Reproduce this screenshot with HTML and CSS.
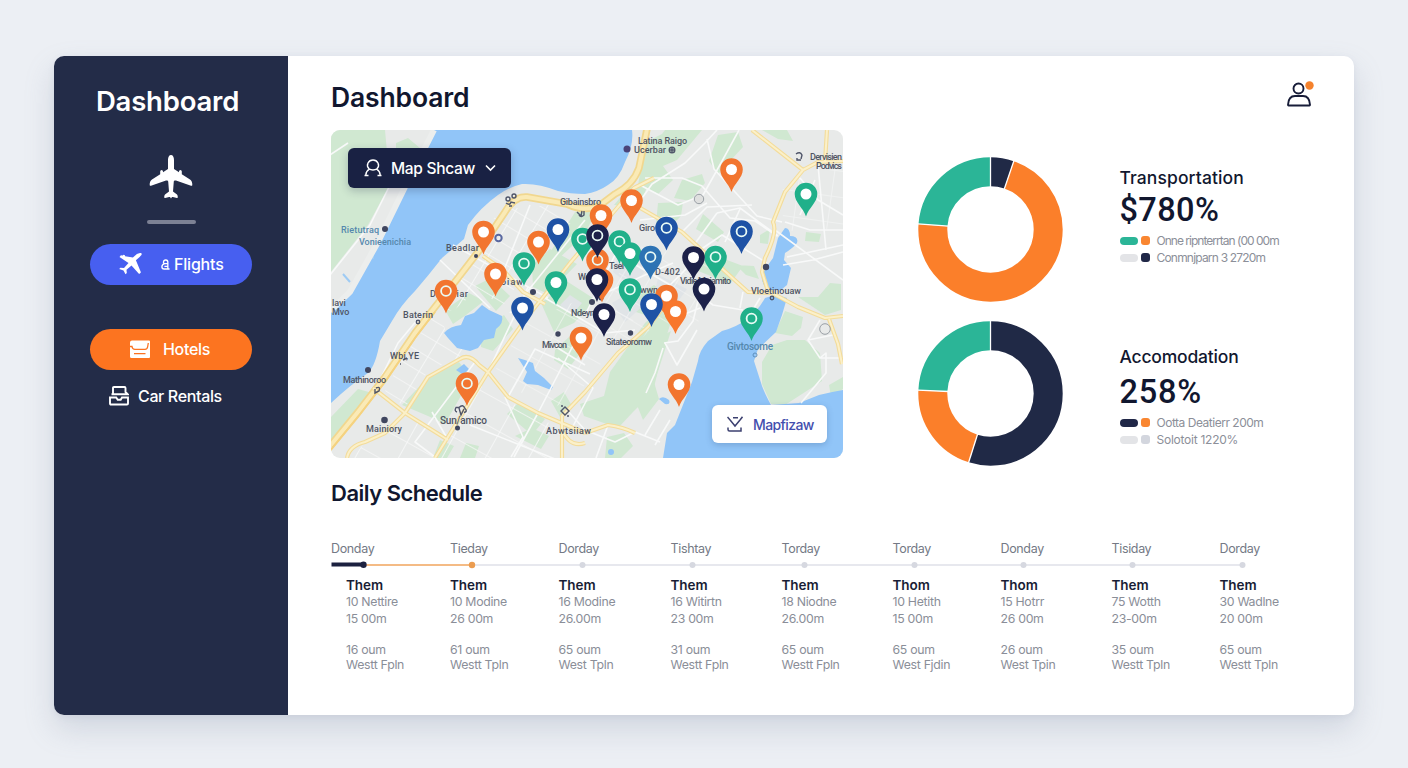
FILE: index.html
```html
<!DOCTYPE html>
<html lang="en">
<head>
<meta charset="utf-8">
<title>Dashboard</title>
<link rel="stylesheet" href="styles.css">
</head>
<body>
<div class="app">
  <aside class="sidebar">
    <div class="brand">Dashboard</div>
    <svg class="brand-plane" viewBox="0 0 44 46" fill="#fff"><path id="plane" d="M22 1c-1.900 0-3 2-3 5v9l-5 3.300v-.8q0-1.500-1.400-1.500t-1.400 1.500v2.700L3 25.500C1.300 26.800.6 28.500.7 31c0 .7.600 1 1.300.8L17 26.600c1-.3 2-.1 2.200.9l.8 10-4 3q-.9 1-.8 2.700 0 .8.900.7l4-1h.9l1 1.700 1-1.700h.9l4 1q.9.100.900-.7.100-1.700-.8-2.700l-4-3 .8-10c.2-1 1.200-1.200 2.200-.9l15 5.200c.7.200 1.300-.1 1.300-.8.100-2.500-.6-4.200-2.300-5.500l-8.200-5.300v-2.700q0-1.500-1.400-1.500T30 17.500v.8L25 15V6c0-3-1.100-5-3-5z"/></svg>
    <div class="rule"></div>
    <nav class="nav">
      <a class="nav-item flights"><svg width="26" height="24" viewBox="0 0 26 24" fill="#fff"><path d="M22 1c.9-.4 2 .3 1.700 1.300-.2.900-1 1.700-1.800 2.400l-4 3.600 4.800 11.500c.2.600.1 1-.3 1.300l-1.300.9-7.600-8.500-5 4.200.3 3.400-1.300 1.200-2-3.700-4.300-1.500 1.200-1.300 3.600.1 4.500-5L1.500 5l1-1.300c.3-.3.700-.4 1.200-.3l1 .2.700-.8 1.500.4.2 1 7.800 1.300 4-3.500c1-.5 2-.7 3.100-1z"/></svg><span><svg class="glyph-a" viewBox="0 0 10 12" fill="none" stroke="#fff" stroke-width="1.500"><path d="M2.800 4.700V3.200Q3 .9 5.400 1q2.200.1 2.200 2.600v7.300M7.600 5H4Q1 5.800 1 8.500 1 11 3.500 11h6M3.800 8h4"/></svg>Flights</span></a>
      <a class="nav-item hotels"><svg width="20" height="18" viewBox="0 0 20 18"><path d="M2 .5h17a1 1 0 0 1 1 1V17a1 1 0 0 1-1 1H1.500A1.500 1.500 0 0 1 0 16.500V2.500a2 2 0 0 1 2-2z" fill="#fff"/><path d="M0 6.500h2c.2 2 1.200 2.900 3 2.900H15c1.700 0 2.500-.9 2.700-2.900l.6-3.500M4 13.600h11.500" fill="none" stroke="#fb7221" stroke-width="1.300"/></svg><span>Hotels</span></a>
      <a class="nav-item cars"><svg width="20" height="20" viewBox="0 0 20 20" fill="none" stroke="#fff" stroke-width="1.900"><path d="M4 7.500V2q0-1 1-1h10.500q1 0 1 1v4l2.300 2.300H2.500M1 11.500h6.200l1.500 2.300h3l1.300-2.300h6v6q0 1-1 1H2q-1 0-1-1z"/></svg><span>Car Rentals</span></a>
    </nav>
  </aside>

  <main class="main">
    <header class="topbar">
      <h1>Dashboard</h1>
      <svg class="user" width="27" height="26" viewBox="0 0 27 26" fill="none" stroke="#171c38" stroke-width="1.900"><circle cx="11.500" cy="7.500" r="5"/><path d="M1.500 24.500h21q.5 0 .5-.8c-.3-5.500-3-8.700-7-8.700H8c-4 0-6.700 3.200-7 8.700q0 .8.500.8z"/><circle cx="22.500" cy="4.500" r="4.200" fill="#f5822c" stroke="none"/></svg>
    </header>

    <section class="overview">
      <div class="map">
        <svg class="map-canvas" viewBox="331 130 512 328">
          <defs>
            <pattern id="gridA" width="25" height="17" patternUnits="userSpaceOnUse" patternTransform="rotate(31)"><path d="M0 0H25M0 0V17" stroke="#f7f8f8" stroke-width="1.700"/></pattern>
            <pattern id="gridB" width="38" height="27" patternUnits="userSpaceOnUse" patternTransform="rotate(29)"><path d="M0 0H38M0 0V27" stroke="#f7f8f8" stroke-width="1.700"/></pattern>
            <pattern id="gridC" width="34" height="26" patternUnits="userSpaceOnUse" patternTransform="rotate(8)"><path d="M0 0H34M0 0V26" stroke="#f5f6f6" stroke-width="1.600"/></pattern>
            <g id="pin"><path d="M0 22.500C-2.500 14-11.300 8.500-11.300 0a11.300 11.300 0 0 1 22.600 0C11.300 8.500 2.500 14 0 22.500z"/></g>
            <g id="dot"><use href="#pin"/><circle r="5.500" fill="#fff"/></g>
            <g id="ring"><use href="#pin"/><circle r="4.900" fill="none" stroke="#e9fbf5" stroke-width="1.800"/></g>
          </defs>
          <rect x="330" y="130" width="514" height="328" fill="#e8eae9"/>

          <!-- parks -->
          <g fill="#d0e8d1">
            <path d="M330 130h55l2 22 10 20-29 53-38 48zM396 143l12-5 12 10-8 10-16-4z"/>
            <path d="M665 130h37l-25 30-14 6 10 14-15 14-20-9 8-43 16-8zM718 135l20-3 5 15-13 14-12 13-9-13zM682 180l20-6 3 9-15 18-16-3zM658 203l25-1-2 14-10 10-15-2zM762 130l25 0 6 11-15-2z"/>
            <path d="M645 323l15-14 12 9-9 30-10 44-20 20-15 16-34-12-4-12 24-8 6-24z"/>
            <path d="M772 345l15-5 18 0 15 13 2 28-20 13-17 11-14-1-9-20 0-22zM785 311l18 6-2 11-9 8-17-3zM829 385l14-8v12l-12 8zM798 297l20 0 12-14 11 1v26l-16 5z"/>
            <path d="M402 405l27-29 30-14 12 16-26 46-17-8zM330 418l28-29 18 5-30 34-15 16zM445 310l24-17 15 8-18 14-13 9zM481 332l23-17 9 14-20 22-12-4zM575 212l22-3-12 25-29 27-5-10zM541 303l27-21 28 18-22 23-20 9zM532 265l18-16 27 15-29 30-15-7zM648 183l-20 5-14 17 26 2zM634 298l20-13 21 15-15 20-24-8zM691 268l20-14 32 12-13 18zM703 214l21 18-6 10-22-13zM507 414l12-12 26 17-13 16zM555 350l14-13 13 14-14 18-14-9zM551 401l13-9 8 14-12 11zM515 436l17-8 17 8-8 13zM607 437l17-4 9 13-12 12h-16zM639 389l15-7 5 17-16 21-6-15zM655 340l16-9-18 56-6-8zM475 286l16-8 19 18-14 15zM440 440l14 6-7 12h-14zM466 443l13 3-4 12h-15zM806 232l15 2-2 8-14-1zM736 265l18 1 5 13-13-4zM760 235l10-6-2 15-8-1z"/>
          </g>
          <g fill="#e0e4e7"><path d="M612 303l20-12 12 14-19 17zM560 305l10-10 12 8-10 12zM618 255l30 12-15 20-20-15zM659 275l28 14-11 15-21-14z"/></g>

          <!-- street grids -->
          <path d="M499 210l50-5 22 18-35 35-34 49-23-18-26 22-19-4 36-50z" fill="url(#gridA)"/>
          <path d="M436 308l11 25 27 18-46 20-23 37-20-17 30-58z" fill="url(#gridA)"/>
          <path d="M362 446l43-31 40 25 25-60 92 50v28H352z" fill="url(#gridB)"/>
          <path d="M494 372l32-50 60-25 50 20-60 80-30 14z" fill="url(#gridB)" opacity=".7"/>
          <path d="M587 312l58-70 65 24-14 68-40-10-30 30z" fill="url(#gridA)" opacity=".6"/>
          <path d="M776 195l27-22 40-5v60l-55 3z" fill="url(#gridC)" opacity=".8"/>

          <!-- water -->
          <g fill="#91c5f8">
            <path d="M434 130h198q2 15-7 32-6 17-17 23-10 7-23 9-15 0-27-3-20-8-36-7-13 3-24 11-17 12-30 30l-4 14-22 19q-14 18-27 33-14 14-23 30l-12 20q-4 24-12 32-18 12-38 31v-94l20-18 28-56 27-44z"/>
            <path d="M444 333q6-7 17-8l4-9 9-3 8-8 7 5 13 6q2 7-6 13l-2 9-10 2-6 8-8 3-13-3-9-10z"/>
            <path d="M518 358q8 2 15 5l2 8 9 7 9 9-2 3-13-5-11-1-4-3 4-9z"/>
            <path d="M765 298q11-5 22 0l-5 17-6 17-18 17-4 12 8 25q3 8 9 19l28-2 20-8q12-3 24-5v68H663l4-25 8-8 17-43 6-21q1-10 10-20l14-10q15-4 25-12 10-7 18-21z"/>
            <path d="M785 228q5 0 5 8 9 0 7 7-4 5-12 10l-1 7 7 8-4 17-6 5h-13q-9-9-5-18l10-14 5-20z"/>
            <path d="M659 399q4-4 10 1 2 5-4 4zM456 370l8-6 6 6-8 4z"/><circle cx="611" cy="452" r="3"/>
          </g>
          <path d="M407 188l-13 24-7 17" fill="none" stroke="#91c5f8" stroke-width="4"/>
          <path d="M373 249v10M343 274l7 8" stroke="#9ecbf4" stroke-width="2"/>
          <path d="M434 130l-28 55-28 57-28 50-20 19" fill="none" stroke="#eceeed" stroke-width="6"/>

          <!-- minor roads -->
          <g class="minor">
            <path d="M330 275l40-50 20-40M330 155l18-12"/>
            <path d="M635 208l17-24 33-21 20-20 12-13M640 185l38 20 25-10 18-32 18-33M645 178l37 0 20 8 28 32 25 3 22 15M707 139l7 30 43 47 25 6M717 213l23-5 38 28M717 213l-23 32 18 22M682 232l25-25 45-2M740 209l-15 33M700 250l22-15 45 28M785 222l25 8 33 0M800 178l18 22 25 15M818 165l8 85M775 230l68 50M787 257l56-12M783 265l30-5 30-8M800 215l15-35M640 220l45-5 22-12"/>
            <path d="M820 320l-12 20 12 18 6-5 0 20-25 30M808 340l25-5M820 358l23 0M700 293l-7 28-15 20-14 2M645 300l30 18 25-10M665 343l12 22 20-35M663 348l-8 25-9 20M693 290l20 15 30 5M743 292l-3 16M760 298l-12 20"/>
            <path d="M435 457l-20-15 60-80M375 390l23-47 25-30M488 372l40-85M505 397l18 40-12 20M538 413l-24 44M538 413l40-77M508 397l27-48 55 25M571 430l22-42-35-30M545 340l40 25M585 430l-18-20M448 440l-16-28M470 425l100 40M440 260l50 48M453 245l95 53M530 205l-30 75M585 220l-75 93M545 298l60 35 30-3M610 250l60 35 25-25M625 235l-40 80M590 300l55-25 28-12"/>
            <path d="M585 430l30 12 20-10 25 10M655 445l15-25M608 425l-12 33M645 435l15-25"/>
          </g>

          <!-- main roads -->
          <g class="road-edge"><path id="r1" d="M330 446l28-34 27-35 30-44 20-26 23-29 20-26 27-40q9-16 22-15l40 7q17 8 32 2l16-12q18-9 24-26l5-24 3-15"/></g>
          <g class="road-core"><use href="#r1"/></g>
          <g class="road2-edge"><path id="r2" d="M435 458l53-86 37-52 45-57 30-35 34-40 20-10M347 458q2-12 18-16l20-9 20-20 23-36 32-18q9-6 19 6l9 7 20 25 30 16 47 20M373 388l32 25 43 27M585 433l23-8q15 2 27 8M562 458v-42l23-24 33-39 30-26 25-32M562 430q8 18 23 13M752 130l51 40 15-8 25-1M803 170l-18 22-12 30q5 10-8 36l-3 14 5 16 5 6M827 130l-2 32M635 205l47 27 36 33 30 27 24 1 26 14 27 11 18-2M829 319l9 25 4 20M483 256l20 14 20 22 22 12"/></g>
          <g class="road2-core"><use href="#r2"/></g>
          <path d="M330 451l28-34 27-35 30-44 20-26" fill="none" stroke="#f5d27f" stroke-width="2"/>

          <!-- place markers -->
          <g fill="#40465f">
            <circle cx="627" cy="149" r="3.500" fill="#4a4379"/><circle cx="368" cy="370" r="3"/><circle cx="384.500" cy="420" r="3.300"/><circle cx="457.500" cy="428" r="2.500"/><circle cx="558" cy="334" r="2.700"/><circle cx="630.500" cy="333" r="2.700"/><circle cx="766" cy="267" r="3.200"/><circle cx="385" cy="229" r="3"/><circle cx="476" cy="256" r="2"/><circle cx="592" cy="302" r="3"/><circle cx="601" cy="298" r="2.500"/><circle cx="533" cy="292" r="3"/>
          </g>
          <g fill="none" stroke="#50566a" stroke-width="1.400">
            <circle cx="672" cy="150" r="2.800"/><path d="M670 150h4M672 148v4"/><circle cx="418" cy="322" r="1.700"/><circle cx="772" cy="298" r="1.700"/><circle cx="498.500" cy="238" r="3.200" stroke="#5968a0" stroke-width="2"/>
            <circle cx="508" cy="199" r="2"/><circle cx="514" cy="196" r="2"/><path d="M506 203q4 3 5-1l4 1M509 206h3"/><path d="M577 212l4 4 1-5M584 211v4q-3 3-5 0"/>
            <path d="M457 412q-3-1-1-4.500h3q4-4 6 1 3 3-1 4M459 408l2 7 3-6"/><path d="M565 407l4 4-4 4-4-4zM561 406h2M567 416h2"/><path d="M376 388q5-2 3 3l-4 2v-4M403 360l4-2M400 364h1"/>
            <path d="M796 154q4-3 6 1l-1 4M797 158v2h4"/>
          </g>
          <g stroke="#999fa5" fill="#dfe0df"><circle cx="699" cy="199" r="4.700"/><circle cx="825" cy="329" r="5.300" fill="none"/></g>
          <circle cx="755" cy="355" r="2" fill="none" stroke="#5c8fbd"/>

          <!-- place names -->
          <g class="place">
            <text x="638" y="144" textLength="49">Latina Raigo</text><text x="634" y="153" textLength="32">Ucerbar</text>
            <text x="810" y="160" textLength="32">Dervisien</text><text x="816" y="169" textLength="26">Podvics</text>
            <text x="560" y="205" textLength="41">Gibainsbro</text><text x="639" y="231" textLength="16">Giro</text>
            <text x="446" y="251" textLength="33">Beadlar</text><text x="488" y="285" textLength="35">Vnoiaw</text>
            <text x="430" y="297" textLength="38">Dostoiar</text><text x="403" y="318" textLength="30">Baterin</text>
            <text x="390" y="359" textLength="29">Wbi,YE</text><text x="343" y="383" textLength="43">Mathinoroo</text>
            <text x="366" y="432" textLength="36">Mainiory</text><text class="lg" x="440" y="424" textLength="47">Sun/amico</text>
            <text x="542" y="348" textLength="25">Mivcon</text><text x="606" y="345" textLength="46">Sitateoromw</text>
            <text x="571" y="316" textLength="28">Ndeyne</text><text x="546" y="434" textLength="45">Abwtsiiaw</text>
            <text x="655" y="275" textLength="25">D-402</text><text x="680" y="284" textLength="51">Vidie Moiamito</text>
            <text x="751" y="294" textLength="50">Vloetinouaw</text><text x="578" y="280" textLength="16">Wes</text><text x="640" y="293" textLength="18">wwn</text><text x="609" y="269" textLength="15">Tsel</text>
            <text x="332" y="306">lavi</text><text x="332" y="315">Mvo</text>
            <g class="water-name"><text x="341" y="233" textLength="38">Rietutraq</text><text x="359" y="245" textLength="52">Vonieenichia</text><text class="lg" x="727" y="350" textLength="46">Givtosome</text></g>
          </g>

          <!-- pins -->
          <g fill="#f2752f">
            <use href="#dot" x="731.500" y="169.500"/><use href="#dot" x="631.500" y="200.500"/><use href="#dot" x="601" y="215.500"/><use href="#dot" x="483.500" y="232"/><use href="#dot" x="538.500" y="242"/><use href="#dot" x="495.500" y="274"/><use href="#ring" x="446" y="291"/><use href="#dot" x="581" y="338"/><use href="#ring" x="467" y="383.500"/><use href="#dot" x="679" y="384.500"/><use href="#ring" x="597.500" y="260"/><use href="#dot" x="602" y="280"/><use href="#dot" x="666.500" y="296"/>
          </g>
          <g fill="#20b08a">
            <use href="#dot" x="806" y="194"/><use href="#ring" x="582.500" y="239"/><use href="#ring" x="524" y="263.500"/><use href="#dot" x="556" y="282.500"/><use href="#ring" x="619.500" y="241.500"/><use href="#dot" x="630" y="253.500"/><use href="#ring" x="630" y="289.500"/><use href="#ring" x="715.500" y="257"/><use href="#ring" x="751.500" y="318.500"/>
          </g>
          <g fill="#1e52a5">
            <use href="#dot" x="558" y="229.500"/><use href="#dot" x="522.500" y="308"/><use href="#ring" x="666.500" y="228"/><use href="#ring" x="741.500" y="231.500"/><use href="#ring" x="650.500" y="257" fill="#2d73b4"/><use href="#dot" x="651.500" y="304.500"/>
          </g>
          <use href="#dot" x="675.500" y="311.500" fill="#f8772d"/>
          <g fill="#1c2149">
            <use href="#ring" x="597.500" y="235.500"/><use href="#dot" x="597" y="279.500"/><use href="#dot" x="604" y="314.500"/><use href="#dot" x="693.500" y="257.500"/><use href="#dot" x="704" y="289"/>
          </g>
        </svg>
        <button class="map-select"><svg width="18" height="18" viewBox="0 0 18 18" fill="none" stroke="#fff" stroke-width="1.400"><path d="M5 9.800C1.500 6 4.500 1 9 1s7.500 5 4 8.800c-2 1.500-6 1.500-8 0zM5.300 10.200c-2.500 1.500-3.300 3-3.500 5.800M12.700 10.200c2.500 1.500 3.300 3 3.500 5.800M.5 16.500h4M13.500 16.500h4"/></svg><span>Map Shcaw</span><svg width="11" height="8" viewBox="0 0 11 8" fill="none" stroke="#fff" stroke-width="1.600"><path d="M1 1.500l4.500 4.500L10 1.500"/></svg></button>
        <button class="map-action"><svg width="16" height="16" viewBox="0 0 16 16" fill="none" stroke="#3c4070" stroke-width="1.500"><path d="M.5 1l2.800 3.200L8 10l5-6 2.500-3.200M6 1.800h5M1 11.500v2q0 1.500 1.500 1.500h11.500V11.500"/></svg><span>Mapfizaw</span></button>
      </div>

      <div class="charts">
        <svg class="donut" viewBox="-72.500 -72.500 145 145"><g fill="none" stroke-width="29" transform="rotate(-90)"><circle r="57.700" pathLength="360" stroke="#202946" stroke-dasharray="18.800 341.200"/><circle r="57.700" pathLength="360" stroke="#fb7f2a" stroke-dasharray="255.700 104.300" stroke-dashoffset="-18.800"/><circle r="57.700" pathLength="360" stroke="#2bb597" stroke-dasharray="85.500 274.500" stroke-dashoffset="-274.500"/><g stroke="#fff" stroke-width="1.300"><path d="M42 0h32"/><path d="M42 0h32" transform="rotate(18.800)"/><path d="M42 0h32" transform="rotate(274.500)"/></g></g></svg>
        <svg class="donut" viewBox="-72.500 -72.500 145 145"><g fill="none" stroke-width="29" transform="rotate(-90)"><circle r="57.700" pathLength="360" stroke="#202946" stroke-dasharray="197.600 162.400"/><circle r="57.700" pathLength="360" stroke="#fb7f2a" stroke-dasharray="75.100 284.900" stroke-dashoffset="-197.600"/><circle r="57.700" pathLength="360" stroke="#2bb597" stroke-dasharray="87.300 272.700" stroke-dashoffset="-272.700"/><g stroke="#fff" stroke-width="1.300"><path d="M42 0h32"/><path d="M42 0h32" transform="rotate(197.600)"/><path d="M42 0h32" transform="rotate(272.700)"/></g></g></svg>
      </div>

      <div class="stats">
        <div class="stat transport">
          <h3>Transportation</h3>
          <div class="value">$780%</div>
          <div class="legend"><i class="bar teal"></i><i class="sq orange"></i><span class="l1">Onne ripnterrtan (00 00m</span></div>
          <div class="legend"><i class="bar pale"></i><i class="sq navy"></i><span class="l2">Conmnjparn 3 2720m</span></div>
        </div>
        <div class="stat lodging">
          <h3>Accomodation</h3>
          <div class="value">258%</div>
          <div class="legend"><i class="bar navy"></i><i class="sq orange"></i><span class="l3">Ootta Deatierr 200m</span></div>
          <div class="legend"><i class="bar pale"></i><i class="sq grey"></i><span class="l4">Solotoit 1220%</span></div>
        </div>
      </div>
    </section>

    <section class="schedule">
      <h2>Daily Schedule</h2>
      <div class="days"><span>Donday</span><span>Tieday</span><span>Dorday</span><span>Tishtay</span><span>Torday</span><span>Torday</span><span>Donday</span><span>Tisiday</span><span>Dorday</span></div>
      <svg class="track" width="920" height="8" viewBox="331 561 920 8"><path d="M472 565h770" stroke="#dfe1e8" stroke-width="1.600"/><path d="M363 565h109" stroke="#f0a45c" stroke-width="1.700"/><path d="M331.500 564.500h32" stroke="#1c2140" stroke-width="3.800"/><circle cx="363.500" cy="564.800" r="3.200" fill="#1c2140"/><circle cx="472" cy="565" r="3.200" fill="#eb9c50"/><g fill="#d6d8e0"><circle cx="582.500" cy="565" r="3"/><circle cx="692.500" cy="565" r="3"/><circle cx="804.500" cy="565" r="3"/><circle cx="914.500" cy="565" r="3"/><circle cx="1023.500" cy="565" r="3"/><circle cx="1132.500" cy="565" r="3"/><circle cx="1242.500" cy="565" r="3"/></g></svg>
      <div class="events">
        <div class="event first"><b>Them</b><p>10 Nettire<br>15 00m</p><p>16 oum<br>Westt Fpln</p></div>
        <div class="event"><b>Them</b><p>10 Modine<br>26 00m</p><p>61 oum<br>Westt Tpln</p></div>
        <div class="event"><b>Them</b><p>16 Modine<br>26.00m</p><p>65 oum<br>West Tpln</p></div>
        <div class="event"><b>Them</b><p>16 Witirtn<br>23 00m</p><p>31 oum<br>Westt Fpln</p></div>
        <div class="event"><b>Them</b><p>18 Niodne<br>26.00m</p><p>65 oum<br>Westt Fpln</p></div>
        <div class="event"><b>Thom</b><p>10 Hetith<br>15 00m</p><p>65 oum<br>West Fjdin</p></div>
        <div class="event"><b>Thom</b><p>15 Hotrr<br>26 00m</p><p>26 oum<br>West Tpin</p></div>
        <div class="event"><b>Them</b><p>75 Wotth<br>23-00m</p><p>35 oum<br>Westt Tpln</p></div>
        <div class="event"><b>Them</b><p>30 Wadlne<br>20 00m</p><p>65 oum<br>Westt Tpln</p></div>
      </div>
    </section>
  </main>
</div>
</body>
</html>
```
FILE: styles.css
```css
* { box-sizing: border-box; margin: 0; padding: 0; }
body {
  width: 1408px; height: 768px; overflow: hidden;
  padding: 56px 54px;
  background: #eceff4;
  font-family: Inter, "Liberation Sans", sans-serif;
  color: #11172f;
}
svg { display: block; flex: none; }
.app {
  display: flex; width: 1300px; height: 659px;
  border-radius: 10px; overflow: hidden; background: #fff;
  box-shadow: 0 14px 30px rgba(120, 132, 160, .24), 0 2px 6px rgba(120, 132, 160, .1);
}

/* sidebar */
.sidebar {
  width: 234px; padding-top: 28px; background: #232c48; color: #fff;
  display: flex; flex-direction: column; align-items: center;
}
.brand { font-size: 27.500px; line-height: 34px; font-weight: 600; letter-spacing: -.2px; margin-right: 7px; }
.brand-plane { width: 44px; height: 46px; margin-top: 36px; }
.rule { width: 49px; height: 3.500px; border-radius: 2px; background: #7c8194; margin-top: 20px; }
.nav { width: 162px; margin-top: 20px; }
.nav-item { display: flex; align-items: center; height: 41px; border-radius: 21px; font-size: 16px; font-weight: 500; }
.nav-item span { display: flex; align-items: center; white-space: nowrap; }
.flights { background: #475ff0; padding-left: 28px; gap: 17px; letter-spacing: -.2px; }
.glyph-a { width: 9px; height: 11px; margin-right: 4px; }
.hotels { background: #fc7420; margin-top: 44px; padding-left: 40px; gap: 13px; letter-spacing: -.3px; }
.cars { height: 26px; margin-top: 13px; padding-left: 19px; gap: 9px; letter-spacing: -.35px; }

/* main column */
.main { flex: 1; padding-left: 43px; }
.topbar { height: 74px; display: flex; justify-content: space-between; align-items: flex-start; padding: 24px 40px 0 0; }
.user { margin-top: 1px; }
h1 { font-size: 26.500px; line-height: 34px; font-weight: 600; letter-spacing: -.15px; }
.overview { display: flex; height: 328px; }
.map { position: relative; width: 512px; height: 328px; border-radius: 9px; overflow: hidden; flex: none; }
.map-canvas { width: 512px; height: 328px; }
.minor { fill: none; stroke: #f8f9f9; stroke-width: 1.600; stroke-linejoin: round; }
.road-edge { fill: none; stroke: #f1d78f; stroke-width: 7.500; }
.road-core { fill: none; stroke: #faeab6; stroke-width: 4; }
.road2-edge { fill: none; stroke: #f3dc9b; stroke-width: 4.200; stroke-linejoin: round; }
.road2-core { fill: none; stroke: #fbf0c9; stroke-width: 2; stroke-linejoin: round; }
.place { font-family: Roboto, sans-serif; font-size: 9px; font-weight: 500; fill: #4f5463; }
.place .lg { font-size: 10px; }
.water-name { fill: #5588ad; }
button { border: 0; font-family: inherit; display: flex; align-items: center; }
.map-select {
  position: absolute; left: 17px; top: 18px; width: 163px; height: 40px;
  border-radius: 6px; background: #192143; color: #fff;
  padding-left: 16px; gap: 9px; font-size: 15.500px; font-weight: 500; letter-spacing: -.3px;
  box-shadow: 0 3px 8px rgba(30, 40, 70, .25);
}
.map-select span { width: 85px; white-space: nowrap; text-align: left; }
.map-action {
  position: absolute; left: 381px; top: 275px; width: 115px; height: 38px;
  border-radius: 6px; background: #fff; color: #434eae;
  padding-left: 15px; gap: 10px; font-size: 14px; font-weight: 500; letter-spacing: -.6px;
  box-shadow: 0 2px 6px rgba(40, 70, 120, .25);
}
.charts { width: 145px; margin: 27px 0 0 74.500px; display: flex; flex-direction: column; gap: 18.500px; flex: none; }
.donut { width: 145px; height: 145px; }
.stats { margin-left: 57px; }
.stat { white-space: nowrap; }
.transport { padding-top: 37px; height: 216px; }
h3 { font-size: 17.500px; line-height: 22px; font-weight: 500; letter-spacing: .1px; }
.lodging h3 { letter-spacing: -.2px; }
.value { font-family: Roboto, sans-serif; font-size: 32.500px; line-height: 40px; font-weight: 500; letter-spacing: .4px; margin-top: 1px; }
.lodging .value { margin-top: 4px; letter-spacing: .8px; }
.legend { display: flex; align-items: center; height: 17px; font-size: 12px; color: #8c8f99; }
.value + .legend { margin-top: 2px; }
.l1 { letter-spacing: -.98px; }
.l2 { letter-spacing: -.8px; }
.l3 { letter-spacing: -.48px; }
.l4 { letter-spacing: -.25px; }
.bar { width: 18px; height: 8px; border-radius: 4px; margin-right: 3px; }
.sq { width: 9px; height: 9px; border-radius: 3px; margin-right: 7px; }
.teal { background: #2bb597; }
.orange { background: #f98631; }
.navy { background: #202747; }
.pale { background: #e3e4e7; }
.grey { background: #d3d6de; }

/* schedule */
.schedule { padding-top: 22px; }
h2 { font-size: 22px; line-height: 26px; font-weight: 600; letter-spacing: -.5px; }
.days, .events { display: grid; grid-template-columns: 119px 108.500px 112px 111px 111px 108px 111px 108px 90px; }
.days { margin-top: 33px; height: 18px; line-height: 19px; font-size: 12.500px; letter-spacing: -.35px; color: #747985; }
.track { margin-top: 4px; }
.events { margin-top: 7px; font-size: 12.300px; letter-spacing: -.3px; color: #8a8e98; }
.event b { display: block; font-size: 13.500px; line-height: 18px; font-weight: 600; letter-spacing: -.05px; color: #191d35; }
.event p { line-height: 16.500px; white-space: nowrap; }
.event p + p { margin-top: 15px; line-height: 15px; }
.first { padding-left: 15px; }
```
